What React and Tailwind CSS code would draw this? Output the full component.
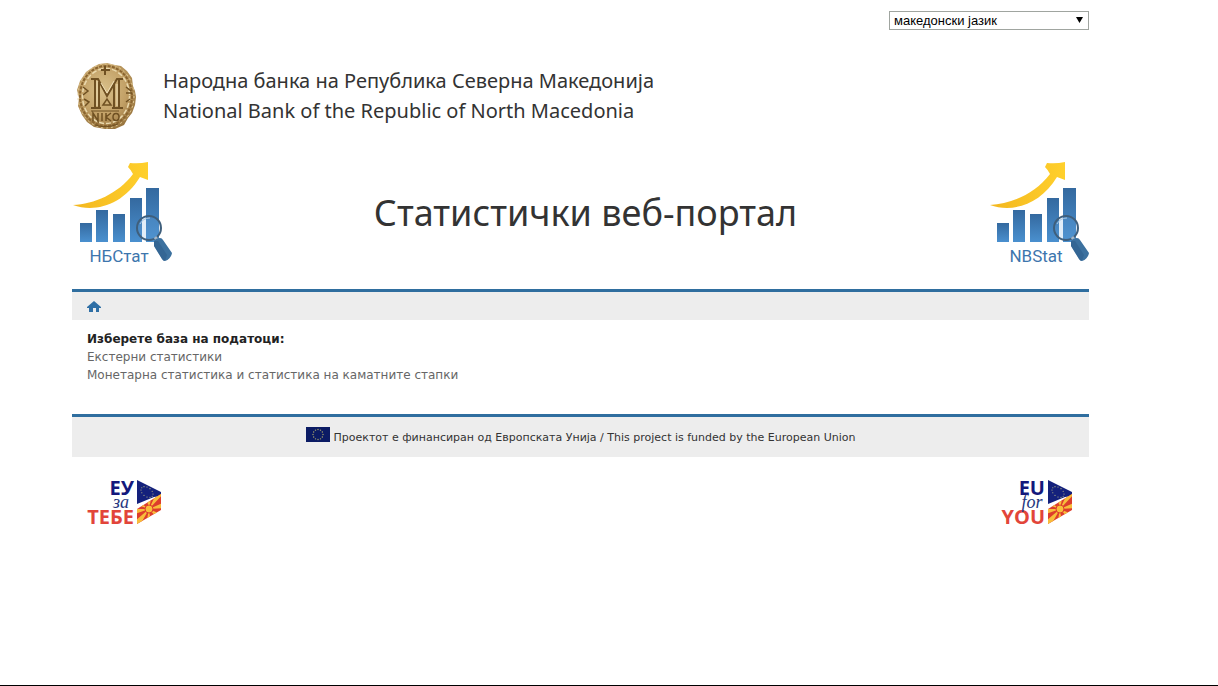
import React, { useState } from 'react';

const LANGUAGES = [
  { value: 'mk', label: 'македонски јазик' },
  { value: 'en', label: 'English' },
];

const DATABASES = [
  'Екстерни статистики',
  'Монетарна статистика и статистика на каматните стапки',
];

const STARS = Array.from({ length: 12 }, (_, i) => {
  const angle = (i * Math.PI) / 6;
  return { x: Math.sin(angle), y: -Math.cos(angle) };
});

const CoinLogo = () => (
  <svg className="h-[68px] w-[60px] shrink-0" viewBox="0 0 60 68" role="img" aria-label="НБРСМ">
    <defs>
      <radialGradient id="coin" cx="0.45" cy="0.4" r="0.65">
        <stop offset="0" stopColor="#d9c08a" />
        <stop offset="0.6" stopColor="#c2a066" />
        <stop offset="1" stopColor="#94703a" />
      </radialGradient>
    </defs>
    <path
      d="M22 2 L30 1 L38 3 L44 4 L50 9 L55 16 L56 24 L58 29 L59 35 L58 43 L55 51 L51 56 L47 63 L38 67 L28 67 L17 65 L10 60 L5 53 L1 44 L2 36 L0 28 L3 19 L9 10 L16 5 Z"
      fill="url(#coin)"
    />
    <ellipse cx="29" cy="34" rx="26" ry="30" fill="none" stroke="#8a6530" strokeWidth="2" strokeDasharray="3 1.3" />
    <ellipse cx="29" cy="34" rx="23.500" ry="27.500" fill="none" stroke="#ead9ae" strokeWidth="1.500" strokeDasharray="5 2" />
    <ellipse cx="29" cy="34" rx="28" ry="32" fill="none" stroke="#e3cc98" strokeWidth="1" strokeDasharray="2 3" />
    <g fill="none" stroke="#6f5022" strokeWidth="2">
      <path d="M14 17 H21 L30 34 L40 17 H46 M18 17 V45 M22 20 V45 M14 46 H24 M37 22 V45 M42 17 V45 M35 46 H46" />
      <path d="M28 4 V13 M24 8 H33" />
      <path d="M26 43 L30 37 L34 43 Z" strokeWidth="1.500" />
      <path d="M6 25 L11 29 L6 33 M7 37 L12 40 L8 44 M49 25 L54 29 M49 31 H55 M49 40 L53 37" strokeWidth="1.500" />
      <path d="M14 49 H42" strokeWidth="1" />
      <path d="M16 59 V51 L21 59 V51 M25 51 V59 M29 51 V59 M34 51 L29 55 L34 59" strokeWidth="1.500" />
      <ellipse cx="39" cy="55" rx="3" ry="3.500" strokeWidth="1.500" />
      <path d="M18 63 Q29 67 41 62" strokeWidth="1" />
    </g>
    <path d="M20 19 V44 M40 22 V44 M24 21 L30 31 L37 19" fill="none" stroke="#f0e0b8" strokeWidth="1" />
  </svg>
);

const StatLogo = ({ id, label }) => (
  <svg className="h-[102px] w-[100px] shrink-0 overflow-visible" viewBox="0 0 100 102" role="img" aria-label={label}>
    <defs>
      <linearGradient id={`${id}-bar`} x1="0" y1="0" x2="0" y2="1">
        <stop offset="0" stopColor="#34699f" />
        <stop offset="1" stopColor="#4a90cf" />
      </linearGradient>
      <linearGradient id={`${id}-arrow`} x1="0" y1="0" x2="1" y2="0">
        <stop offset="0" stopColor="#f3b71f" />
        <stop offset="1" stopColor="#ffd02c" />
      </linearGradient>
    </defs>
    <path
      d="M1 43 C22 42 46 32 61 12 Q59 8 56 5 L58 1 Q67 2 76 0 V18 L68 15 C51 43 23 51 1 43 Z"
      fill={`url(#${id}-arrow)`}
    />
    <g fill={`url(#${id}-bar)`}>
      <rect x="8" y="61" width="12" height="19" />
      <rect x="24" y="48" width="12" height="32" />
      <rect x="41" y="52" width="12" height="28" />
      <rect x="58" y="36" width="12" height="44" />
      <rect x="74" y="26" width="13" height="54" />
    </g>
    <circle cx="77" cy="66" r="12" fill="#6aa4db" fillOpacity="0.2" stroke="#3f5f7c" strokeWidth="2" />
    <path d="M68 62 Q71 56 78 56" fill="none" stroke="#a9c7e2" strokeWidth="1" />
    <path d="M83 75 L86 79" stroke="#a6b6c6" strokeWidth="3" />
    <path d="M82 79 Q84 76 88 76 Q90 76 91 78 L100 91 Q99 97 93 99 Q91 99 90 97 L82 84 Z" fill="#3c719f" />
    <path d="M82 79 L86 79 L95 93 L93 99 Q91 99 90 97 L82 84 Z" fill="#2c5b89" fillOpacity="0.5" />
    <text x="47" y="100" textAnchor="middle" fontFamily="Roboto, sans-serif" fontSize="17" fill="#3d76ad">
      {label}
    </text>
  </svg>
);

const EuFlag = () => (
  <svg className="h-[15px] w-6 shrink-0" viewBox="0 0 24 15" aria-hidden="true">
    <rect width="24" height="15" fill="#0b1b64" />
    {STARS.map((star, i) => (
      <circle key={i} cx={12 + star.x * 5} cy={7.5 + star.y * 5} r="0.700" fill="#a8a66a" />
    ))}
  </svg>
);

const EuForYouLogo = ({ id, top, middle, bottom }) => (
  <svg
    className="h-12 w-[76px] shrink-0 overflow-visible"
    viewBox="0 0 76 48"
    role="img"
    aria-label={`${top} ${middle} ${bottom}`}
  >
    <defs>
      <clipPath id={`${id}-flag`}>
        <path d="M50 32 L74 17 V33 L50 47 Z" />
      </clipPath>
    </defs>
    <g fontFamily="'Open Sans', sans-serif" fontWeight="700" textAnchor="end">
      <text x="47" y="18" fontSize="20" fill="#14187c">{top}</text>
      <text x="47" y="47" fontSize="20" fill="#e2453a">{bottom}</text>
    </g>
    <text
      x="34"
      y="31"
      fontFamily="'Liberation Serif', serif"
      fontStyle="italic"
      fontSize="18"
      textAnchor="middle"
      fill="#26377f"
    >
      {middle}
    </text>
    <path d="M50 3 L74 15 V19 L67 20 L50 27 Z" fill="#14217c" />
    {STARS.map((star, i) => (
      <circle key={i} cx={60 + star.x * 6} cy={15 + star.y * 5 + star.x * 2} r="0.600" fill="#b9b787" />
    ))}
    <g clipPath={`url(#${id}-flag)`}>
      <rect x="50" y="16" width="24" height="32" fill="#dd3d2c" />
      <path
        d="M62 32 L48 32 V37 Z M62 32 L76 26 V31 Z M62 32 L59 19 L65 17 Z M62 32 L59 48 L64 48 Z M62 32 L48 44 L52 50 Z M62 32 L70 15 L76 17 Z M62 32 L48 27 L52 25 Z M62 32 L72 43 L76 38 Z"
        fill="#f8bd3b"
      />
      <circle cx="62" cy="32" r="4" fill="#f8bd3b" stroke="#dd3d2c" strokeWidth="1" />
    </g>
  </svg>
);

const HomeIcon = () => (
  <svg className="h-[11px] w-[14px]" viewBox="0 0 14 11" aria-hidden="true">
    <path d="M7 0 L14 6 V7 H12 V11 H9 V7 H6 V11 H2 V7 H0 V6 Z" fill="#2f6fa5" />
  </svg>
);

const LanguageSelect = () => {
  const [language, setLanguage] = useState('mk');

  return (
    <div className="relative w-[200px]">
      <select
        aria-label="Јазик"
        value={language}
        onChange={(e) => setLanguage(e.target.value)}
        className="block h-[19px] w-full appearance-none border border-[#a0a5a0] bg-white pl-1 pr-5 font-['Liberation_Sans',sans-serif] text-[13px] leading-[17px] text-black"
      >
        {LANGUAGES.map((item) => (
          <option key={item.value} value={item.value}>
            {item.label}
          </option>
        ))}
      </select>
      <svg className="pointer-events-none absolute right-1.5 top-1.5 h-1.5 w-[7px]" viewBox="0 0 7 6" aria-hidden="true">
        <path d="M0 0 H7 L3.500 6 Z" fill="#000" />
      </svg>
    </div>
  );
};

const App = () => {
  return (
    <div className="min-h-screen border-b border-black bg-white pl-[72px] pr-[129px] pt-[11px] font-['DejaVu_Sans',sans-serif] text-xs text-[#333333]">
      <div className="flex justify-end">
        <LanguageSelect />
      </div>

      <header>
        <div className="mt-8 flex items-start gap-[26px] pl-[5px]">
          <CoinLogo />
          <div className="pt-1 font-['Noto_Sans',sans-serif] text-xl leading-[30px]">
            <p>Народна банка на Република Северна Македонија</p>
            <p>National Bank of the Republic of North Macedonia</p>
          </div>
        </div>

        <div className="mt-8 flex items-center justify-between">
          <StatLogo id="stat-mk" label="НБСтат" />
          <h1 className="pl-2.5 font-['Noto_Sans',sans-serif] text-4xl">Статистички веб-портал</h1>
          <StatLogo id="stat-en" label="NBStat" />
        </div>
      </header>

      <nav className="mt-[25px] flex h-[31px] items-center border-t-3 border-[#2f6e9f] bg-[#ededed] px-[15px]">
        <a href="#" aria-label="Почетна">
          <HomeIcon />
        </a>
      </nav>

      <main className="px-[15px] pb-[30px] pt-[10px] leading-[18px]">
        <h2 className="font-bold text-[#222222]">Изберете база на податоци:</h2>
        <ul>
          {DATABASES.map((name) => (
            <li key={name}>
              <a href="#" className="text-[#666666] hover:underline">
                {name}
              </a>
            </li>
          ))}
        </ul>
      </main>

      <footer>
        <div className="flex h-[43px] items-start justify-center gap-1 border-t-3 border-[#2f6e9f] bg-[#ededed] pt-[10px] text-[11px]">
          <EuFlag />
          <p className="pt-1">
            Проектот е финансиран од Европската Унија / This project is funded by the European Union
          </p>
        </div>
        <div className="mt-5 flex justify-between px-[15px]">
          <EuForYouLogo id="eu-mk" top="ЕУ" middle="за" bottom="ТЕБЕ" />
          <EuForYouLogo id="eu-en" top="EU" middle="for" bottom="YOU" />
        </div>
      </footer>
    </div>
  );
};

export default App;
